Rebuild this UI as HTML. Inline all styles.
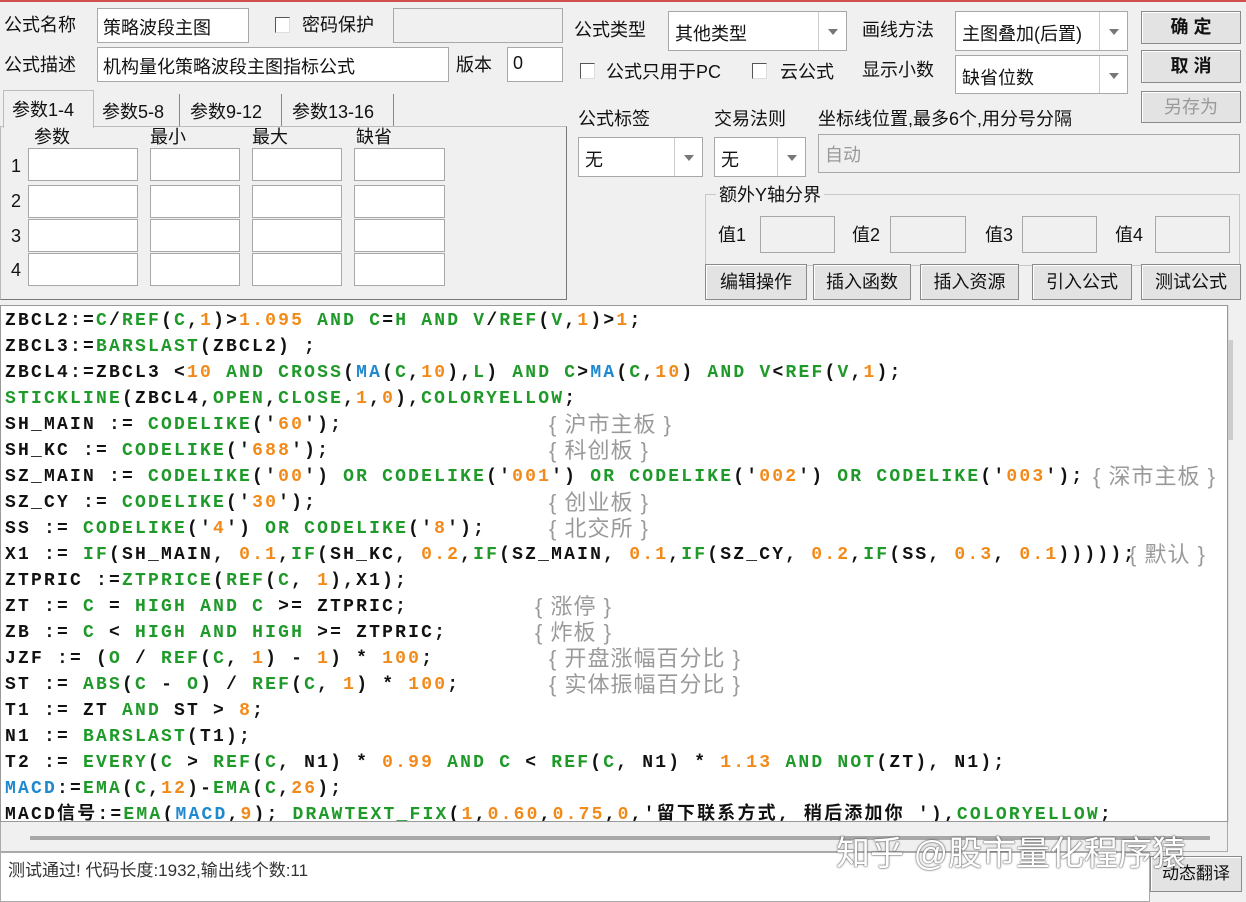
<!DOCTYPE html>
<html><head><meta charset="utf-8"><style>
*{box-sizing:border-box;margin:0;padding:0}
body{width:1246px;height:902px;background:#f0f0f0;position:relative;overflow:hidden;font-family:"Liberation Sans","Noto Sans CJK SC",sans-serif;font-size:18px;color:#111}
.a{position:absolute}
.in{position:absolute;background:#fff;border:1px solid #a8a8a8}
.dis{background:#f0f0f0}
.lbl{position:absolute;font-size:18px;line-height:22px}
.btn{position:absolute;background:#e3e3e3;border:1px solid #8a8a8a;box-shadow:inset 1px 1px 0 #fff;text-align:center;font-size:18px}
.cb{position:absolute;width:15px;height:16px;border:1px solid #555;background:#fff;border-right-color:#ddd;border-bottom-color:#ddd}
.dd{position:absolute;top:0;right:0;bottom:0;width:28px;border-left:1px solid #ccc}
.dd:after{content:"";position:absolute;left:9px;top:50%;margin-top:-2px;border:5px solid transparent;border-top:6px solid #777}
.code{position:absolute;left:0;top:305px;width:1228px;height:517px;background:#fff;border:1px solid #999;overflow:hidden}
.ln{position:absolute;left:4px;height:26px;line-height:26px;font-family:"Liberation Mono","Noto Sans CJK SC",monospace;font-weight:bold;font-size:18px;letter-spacing:2.2px;white-space:pre;color:#111;overflow:visible}
.g{color:#1f9a2a}.o{color:#f28a1a}.b{color:#1e88d0}
.c{color:#9a9a9a;font-family:"Liberation Sans","Noto Sans CJK SC",sans-serif;font-weight:normal;font-size:22px;letter-spacing:1px;line-height:26px}
.cm{position:absolute;top:0}
</style></head><body>
<div class="a" style="left:0;top:0;width:1246px;height:2px;background:#d05050"></div>

<div class="lbl" style="left:4px;top:14px">公式名称</div>
<div class="in" style="left:97px;top:8px;width:152px;height:35px;padding:5px 5px;font-size:18px">策略波段主图</div>
<div class="cb" style="left:275px;top:17px"></div>
<div class="lbl" style="left:302px;top:14px">密码保护</div>
<div class="in dis" style="left:393px;top:8px;width:170px;height:35px"></div>
<div class="lbl" style="left:4px;top:54px">公式描述</div>
<div class="in" style="left:97px;top:47px;width:352px;height:35px;padding:5px 5px">机构量化策略波段主图指标公式</div>
<div class="lbl" style="left:456px;top:54px">版本</div>
<div class="in" style="left:507px;top:47px;width:56px;height:35px;padding:5px 5px">0</div>

<div class="a" style="left:0;top:126px;width:567px;height:174px;border:1px solid #bbb;border-right-color:#777;border-bottom-color:#777"></div>
<div class="a" style="left:3px;top:90px;width:91px;height:38px;background:#f0f0f0;border:1px solid #bbb;border-bottom:none;padding:5px 8px;font-size:18px">参数1-4</div>
<div class="a" style="left:96px;top:94px;width:84px;height:32px;border-right:1px solid #888;padding:4px 6px">参数5-8</div>
<div class="a" style="left:184px;top:94px;width:98px;height:32px;border-right:1px solid #888;padding:4px 6px">参数9-12</div>
<div class="a" style="left:286px;top:94px;width:108px;height:32px;border-right:1px solid #888;padding:4px 6px">参数13-16</div>
<div class="lbl" style="left:34px;top:126px">参数</div>
<div class="lbl" style="left:150px;top:126px">最小</div>
<div class="lbl" style="left:252px;top:126px">最大</div>
<div class="lbl" style="left:356px;top:126px">缺省</div>
<div class="lbl" style="left:11px;top:155px">1</div><div class="lbl" style="left:11px;top:190px">2</div><div class="lbl" style="left:11px;top:225px">3</div><div class="lbl" style="left:11px;top:259px">4</div>
<div class="in" style="left:28px;top:148px;width:110px;height:33px"></div><div class="in" style="left:150px;top:148px;width:90px;height:33px"></div><div class="in" style="left:252px;top:148px;width:90px;height:33px"></div><div class="in" style="left:354px;top:148px;width:91px;height:33px"></div>
<div class="in" style="left:28px;top:185px;width:110px;height:33px"></div><div class="in" style="left:150px;top:185px;width:90px;height:33px"></div><div class="in" style="left:252px;top:185px;width:90px;height:33px"></div><div class="in" style="left:354px;top:185px;width:91px;height:33px"></div>
<div class="in" style="left:28px;top:219px;width:110px;height:33px"></div><div class="in" style="left:150px;top:219px;width:90px;height:33px"></div><div class="in" style="left:252px;top:219px;width:90px;height:33px"></div><div class="in" style="left:354px;top:219px;width:91px;height:33px"></div>
<div class="in" style="left:28px;top:253px;width:110px;height:33px"></div><div class="in" style="left:150px;top:253px;width:90px;height:33px"></div><div class="in" style="left:252px;top:253px;width:90px;height:33px"></div><div class="in" style="left:354px;top:253px;width:91px;height:33px"></div>

<div class="lbl" style="left:574px;top:19px">公式类型</div>
<div class="in" style="left:668px;top:11px;width:179px;height:40px;padding:8px 6px">其他类型<div class="dd"></div></div>
<div class="lbl" style="left:862px;top:19px">画线方法</div>
<div class="in" style="left:955px;top:11px;width:173px;height:40px;padding:8px 6px">主图叠加(后置)<div class="dd"></div></div>
<div class="btn" style="left:1141px;top:11px;width:100px;height:33px;line-height:30px;font-weight:bold">确 定</div>
<div class="btn" style="left:1141px;top:50px;width:100px;height:33px;line-height:30px;font-weight:bold">取 消</div>
<div class="btn" style="left:1141px;top:91px;width:100px;height:32px;line-height:30px;color:#999">另存为</div>
<div class="cb" style="left:580px;top:63px"></div>
<div class="lbl" style="left:606px;top:61px">公式只用于PC</div>
<div class="cb" style="left:752px;top:63px"></div>
<div class="lbl" style="left:780px;top:61px">云公式</div>
<div class="lbl" style="left:862px;top:59px">显示小数</div>
<div class="in" style="left:955px;top:55px;width:173px;height:39px;padding:8px 6px">缺省位数<div class="dd"></div></div>

<div class="lbl" style="left:578px;top:108px">公式标签</div>
<div class="lbl" style="left:714px;top:108px">交易法则</div>
<div class="lbl" style="left:818px;top:108px">坐标线位置,最多6个,用分号分隔</div>
<div class="in" style="left:578px;top:137px;width:125px;height:40px;padding:8px 6px">无<div class="dd"></div></div>
<div class="in" style="left:714px;top:137px;width:92px;height:40px;padding:8px 6px">无<div class="dd"></div></div>
<div class="in dis" style="left:818px;top:134px;width:422px;height:39px;padding:6px 6px;color:#999">自动</div>
<div class="a" style="left:705px;top:194px;width:535px;height:72px;border:1px solid #c8c8c8"></div>
<div class="lbl" style="left:716px;top:184px;background:#f0f0f0;padding:0 3px">额外Y轴分界</div>
<div class="lbl" style="left:718px;top:224px">值1</div><div class="in dis" style="left:760px;top:216px;width:75px;height:37px"></div>
<div class="lbl" style="left:852px;top:224px">值2</div><div class="in dis" style="left:890px;top:216px;width:76px;height:37px"></div>
<div class="lbl" style="left:985px;top:224px">值3</div><div class="in dis" style="left:1022px;top:216px;width:75px;height:37px"></div>
<div class="lbl" style="left:1115px;top:224px">值4</div><div class="in dis" style="left:1155px;top:216px;width:75px;height:37px"></div>
<div class="btn" style="left:705px;top:264px;width:102px;height:36px;line-height:34px">编辑操作</div>
<div class="btn" style="left:813px;top:264px;width:98px;height:36px;line-height:34px">插入函数</div>
<div class="btn" style="left:920px;top:264px;width:99px;height:36px;line-height:34px">插入资源</div>
<div class="btn" style="left:1032px;top:264px;width:100px;height:36px;line-height:34px">引入公式</div>
<div class="btn" style="left:1141px;top:264px;width:100px;height:36px;line-height:34px">测试公式</div>

<div class="code">
<div class="ln" style="top:2px">ZBCL2:=<span class="g">C</span>/<span class="g">REF</span>(<span class="g">C</span>,<span class="o">1</span>)&gt;<span class="o">1.095</span> <span class="g">AND</span> <span class="g">C</span>=<span class="g">H</span> <span class="g">AND</span> <span class="g">V</span>/<span class="g">REF</span>(<span class="g">V</span>,<span class="o">1</span>)&gt;<span class="o">1</span>;</div>
<div class="ln" style="top:28px">ZBCL3:=<span class="g">BARSLAST</span>(ZBCL2) ;</div>
<div class="ln" style="top:54px">ZBCL4:=ZBCL3 &lt;<span class="o">10</span> <span class="g">AND</span> <span class="g">CROSS</span>(<span class="b">MA</span>(<span class="g">C</span>,<span class="o">10</span>),<span class="g">L</span>) <span class="g">AND</span> <span class="g">C</span>&gt;<span class="b">MA</span>(<span class="g">C</span>,<span class="o">10</span>) <span class="g">AND</span> <span class="g">V</span>&lt;<span class="g">REF</span>(<span class="g">V</span>,<span class="o">1</span>);</div>
<div class="ln" style="top:80px"><span class="g">STICKLINE</span>(ZBCL4,<span class="g">OPEN</span>,<span class="g">CLOSE</span>,<span class="o">1</span>,<span class="o">0</span>),<span class="g">COLORYELLOW</span>;</div>
<div class="ln" style="top:106px">SH_MAIN := <span class="g">CODELIKE</span>('<span class="o">60</span>');<span class="cm c" style="left:544px">{ 沪市主板 }</span></div>
<div class="ln" style="top:132px">SH_KC := <span class="g">CODELIKE</span>('<span class="o">688</span>');<span class="cm c" style="left:544px">{ 科创板 }</span></div>
<div class="ln" style="top:158px">SZ_MAIN := <span class="g">CODELIKE</span>('<span class="o">00</span>') <span class="g">OR</span> <span class="g">CODELIKE</span>('<span class="o">001</span>') <span class="g">OR</span> <span class="g">CODELIKE</span>('<span class="o">002</span>') <span class="g">OR</span> <span class="g">CODELIKE</span>('<span class="o">003</span>');<span class="cm c" style="left:1088px">{ 深市主板 }</span></div>
<div class="ln" style="top:184px">SZ_CY := <span class="g">CODELIKE</span>('<span class="o">30</span>');<span class="cm c" style="left:544px">{ 创业板 }</span></div>
<div class="ln" style="top:210px">SS := <span class="g">CODELIKE</span>('<span class="o">4</span>') <span class="g">OR</span> <span class="g">CODELIKE</span>('<span class="o">8</span>');<span class="cm c" style="left:544px">{ 北交所 }</span></div>
<div class="ln" style="top:236px">X1 := <span class="g">IF</span>(SH_MAIN, <span class="o">0.1</span>,<span class="g">IF</span>(SH_KC, <span class="o">0.2</span>,<span class="g">IF</span>(SZ_MAIN, <span class="o">0.1</span>,<span class="g">IF</span>(SZ_CY, <span class="o">0.2</span>,<span class="g">IF</span>(SS, <span class="o">0.3</span>, <span class="o">0.1</span>)))));<span class="cm c" style="left:1124px">{ 默认 }</span></div>
<div class="ln" style="top:262px">ZTPRIC :=<span class="g">ZTPRICE</span>(<span class="g">REF</span>(<span class="g">C</span>, <span class="o">1</span>),X1);</div>
<div class="ln" style="top:288px">ZT := <span class="g">C</span> = <span class="g">HIGH</span> <span class="g">AND</span> <span class="g">C</span> &gt;= ZTPRIC;<span class="cm c" style="left:530px">{ 涨停 }</span></div>
<div class="ln" style="top:314px">ZB := <span class="g">C</span> &lt; <span class="g">HIGH</span> <span class="g">AND</span> <span class="g">HIGH</span> &gt;= ZTPRIC;<span class="cm c" style="left:530px">{ 炸板 }</span></div>
<div class="ln" style="top:340px">JZF := (<span class="g">O</span> / <span class="g">REF</span>(<span class="g">C</span>, <span class="o">1</span>) - <span class="o">1</span>) * <span class="o">100</span>;<span class="cm c" style="left:544px">{ 开盘涨幅百分比 }</span></div>
<div class="ln" style="top:366px">ST := <span class="g">ABS</span>(<span class="g">C</span> - <span class="g">O</span>) / <span class="g">REF</span>(<span class="g">C</span>, <span class="o">1</span>) * <span class="o">100</span>;<span class="cm c" style="left:544px">{ 实体振幅百分比 }</span></div>
<div class="ln" style="top:392px">T1 := ZT <span class="g">AND</span> ST &gt; <span class="o">8</span>;</div>
<div class="ln" style="top:418px">N1 := <span class="g">BARSLAST</span>(T1);</div>
<div class="ln" style="top:444px">T2 := <span class="g">EVERY</span>(<span class="g">C</span> &gt; <span class="g">REF</span>(<span class="g">C</span>, N1) * <span class="o">0.99</span> <span class="g">AND</span> <span class="g">C</span> &lt; <span class="g">REF</span>(<span class="g">C</span>, N1) * <span class="o">1.13</span> <span class="g">AND</span> <span class="g">NOT</span>(ZT), N1);</div>
<div class="ln" style="top:470px"><span class="b">MACD</span>:=<span class="g">EMA</span>(<span class="g">C</span>,<span class="o">12</span>)-<span class="g">EMA</span>(<span class="g">C</span>,<span class="o">26</span>);</div>
<div class="ln" style="top:496px">MACD信号:=<span class="g">EMA</span>(<span class="b">MACD</span>,<span class="o">9</span>); <span class="g">DRAWTEXT_FIX</span>(<span class="o">1</span>,<span class="o">0.60</span>,<span class="o">0.75</span>,<span class="o">0</span>,'留下联系方式, 稍后添加你 '),<span class="g">COLORYELLOW</span>;</div>
</div>
<div class="a" style="left:1228px;top:305px;width:18px;height:517px;background:#f0f0f0;border-left:1px solid #ddd"></div>
<div class="a" style="left:1228px;top:340px;width:5px;height:100px;background:#cdcdcd"></div>
<div class="a" style="left:0;top:822px;width:1228px;height:30px;background:#f0f0f0;border:1px solid #aaa;border-top:none"></div>
<div class="a" style="left:30px;top:836px;width:1180px;height:4px;background:#a8a8a8"></div>
<div class="a" style="left:0;top:852px;width:1150px;height:50px;background:#fff;border:1px solid #aaa"></div>
<div class="lbl" style="left:8px;top:860px;color:#333;font-size:17px">测试通过! 代码长度:1932,输出线个数:11</div>
<div class="btn" style="left:1150px;top:856px;width:92px;height:36px;line-height:34px;font-size:17px">动态翻译</div>
<div class="a" style="left:836px;top:826px;font-size:34px;color:#fff;text-shadow:0 0 2px #555,0 0 1px #333;white-space:nowrap">知乎 @股市量化程序猿</div>
</body></html>
